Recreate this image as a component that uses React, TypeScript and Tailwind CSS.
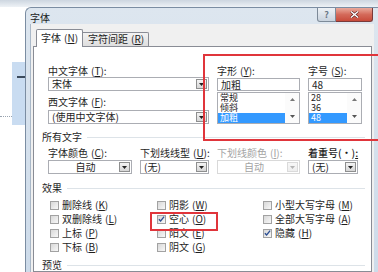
import type { ReactNode } from "react";

// Word 「字体」 dialog (Win7 style) over a document, with two red annotation boxes.

function Key({ label, k, colon = true }: { label: string; k: string; colon?: boolean }) {
  return (
    <span className="whitespace-nowrap">
      {label}
      <span className="ml-[3px]">
        (<span className="underline underline-offset-1">{k}</span>){colon ? ":" : ""}
      </span>
    </span>
  );
}

function DropBtn({ disabled }: { disabled?: boolean }) {
  return (
    <div
      className={
        disabled
          ? "my-[1px] mr-[1px] flex w-[11px] items-center justify-center border border-[#dadada] bg-gradient-to-b from-[#f7f7f7] to-[#eeeeee]"
          : "my-[1px] mr-[1px] flex w-[11px] items-center justify-center border border-[#8e8f8f] bg-gradient-to-b from-[#f4f4f4] to-[#d6d6d6]"
      }
    >
      <svg width="5" height="3" viewBox="0 0 5 3">
        <path d="M0 0h5L2.5 3z" fill={disabled ? "#b4b4b4" : "#222"} />
      </svg>
    </div>
  );
}

function Combo({
  value,
  className,
  center,
  disabled,
}: {
  value: string;
  className: string;
  center?: boolean;
  disabled?: boolean;
}) {
  return (
    <div
      className={`flex h-[14px] border bg-white ${disabled ? "border-[#d9d9d9]" : "border-[#abadb3]"} ${className}`}
    >
      <div
        className={`flex-1 whitespace-nowrap pl-[3px] leading-[12px] ${center ? "text-center" : ""} ${disabled ? "text-[#a3a3a3]" : ""}`}
      >
        {value}
      </div>
      <DropBtn disabled={disabled} />
    </div>
  );
}

function ListBox({ items, selected }: { items: string[]; selected: string }) {
  return (
    <div className="mt-[1px] flex h-[32px] border border-[#abadb3] bg-white">
      <div className="flex flex-1 flex-col text-[9px] leading-[10px]">
        {items.map((it) => (
          <div
            key={it}
            className={it === selected ? "h-[10px] bg-[#3399ff] pl-[2px] text-white" : "h-[10px] pl-[2px]"}
          >
            {it}
          </div>
        ))}
      </div>
      <div className="flex w-[14px] flex-col items-center justify-between bg-[#fbfbfb] py-[5px]">
        <svg width="5" height="3" viewBox="0 0 5 3">
          <path d="M0 3h5L2.5 0z" fill="#777" />
        </svg>
        <svg width="5" height="3" viewBox="0 0 5 3">
          <path d="M0 0h5L2.5 3z" fill="#555" />
        </svg>
      </div>
    </div>
  );
}

function Section({ title }: { title: string }) {
  return (
    <div className="flex h-[12px] items-center leading-[12px]">
      <span>{title}</span>
      <div className="ml-[5px] mr-[6px] h-px flex-1 bg-[#dde3e8]" />
    </div>
  );
}

function Check({ label, k, checked }: { label: string; k: string; checked?: boolean }) {
  return (
    <div className="flex h-[14px] items-center leading-[12px]">
      <div className="flex h-[9px] w-[9px] items-center justify-center border border-[#a2a2a2] bg-gradient-to-br from-[#d8d8d8] to-[#f8f8f8]">
        {checked && (
          <svg width="8" height="8" viewBox="0 0 8 8">
            <path d="M1 4.2 3 6.3 7 1.2" fill="none" stroke="#2c4f93" strokeWidth="1.5" />
          </svg>
        )}
      </div>
      <span className="ml-[3px]">
        <Key label={label} k={k} colon={false} />
      </span>
    </div>
  );
}

function Col({ children, className }: { children: ReactNode; className: string }) {
  return <div className={`flex flex-col ${className}`}>{children}</div>;
}

function DocStrip() {
  return (
    <div className="flex w-[25px] flex-col bg-white">
      <div className="h-[55px]" />
      <div className="flex h-[63px]">
        <div className="flex w-[12px] flex-col justify-end">
          <div className="mb-[8px] border-b border-dotted border-[#9aa4b0]" />
        </div>
        <div className="flex w-[13px] flex-col bg-[#c9dcf1]">
          <div className="ml-[5px] mt-[14px] h-[2px] bg-[#3b4a5c]" />
        </div>
      </div>
    </div>
  );
}

function TitleBar() {
  return (
    <div className="flex h-[22px] items-start">
      <div className="pl-[4px] pt-[4px] leading-[12px] text-[#1a1a1a]">字体</div>
      <div className="flex-1" />
      <div className="mr-[5px] flex">
        <div className="flex h-[14px] w-[19px] items-center justify-center rounded-bl-[3px] border border-t-0 border-[#7d8a98] bg-gradient-to-b from-[#eef2f6] to-[#c9d3de] text-[9px] font-bold leading-none text-[#6b7786]">
          ?
        </div>
        <div className="flex h-[14px] w-[37px] items-center justify-center rounded-br-[3px] border border-l-0 border-t-0 border-[#7a3a3a] bg-gradient-to-b from-[#e9a99c] via-[#d46a5a] to-[#c84a3a]">
          <svg width="9" height="7" viewBox="0 0 9 7">
            <path d="M1 0.5 8 6.5M8 0.5 1 6.5" stroke="#5a2020" strokeWidth="2.6" />
            <path d="M1 0.5 8 6.5M8 0.5 1 6.5" stroke="#fff" strokeWidth="1.4" />
          </svg>
        </div>
      </div>
    </div>
  );
}

function FontPanel() {
  return (
    <div className="flex flex-1 flex-col border border-[#898c95] bg-white pl-[8px]">
      {/* top row: font names, style, size */}
      <div className="mt-[18px] flex pl-[6px]">
        <Col className="w-[161px]">
          <div className="h-[12px] leading-[12px]">
            <Key label="中文字体" k="T" />
          </div>
          <Combo value="宋体" className="w-[161px]" />
          <div className="mt-[5px] h-[12px] leading-[12px]">
            <Key label="西文字体" k="F" />
          </div>
          <Combo value="(使用中文字体)" className="mt-[2px] w-[161px]" />
        </Col>
        <Col className="ml-[8px] w-[83px]">
          <div className="h-[12px] leading-[12px]">
            <Key label="字形" k="Y" />
          </div>
          <div className="mt-[1px] h-[13px] border border-[#abadb3] pl-[3px] leading-[11px]">加粗</div>
          <ListBox items={["常规", "倾斜", "加粗"]} selected="加粗" />
        </Col>
        <Col className="ml-[8px] w-[54px]">
          <div className="h-[12px] leading-[12px]">
            <Key label="字号" k="S" />
          </div>
          <div className="mt-[1px] h-[13px] border border-[#abadb3] pl-[3px] leading-[11px]">48</div>
          <ListBox items={["28", "36", "48"]} selected="48" />
        </Col>
      </div>

      <div className="mt-[7px]">
        <Section title="所有文字" />
      </div>
      <div className="mt-[4px] flex pl-[6px]">
        <Col className="w-[84px]">
          <div className="h-[12px] leading-[12px]">
            <Key label="字体颜色" k="C" />
          </div>
          <Combo value="自动" center className="mt-[1px] w-[84px]" />
        </Col>
        <Col className="ml-[8px] w-[69px]">
          <div className="h-[12px] leading-[12px]">
            <Key label="下划线线型" k="U" />
          </div>
          <Combo value="(无)" className="mt-[1px] w-[69px]" />
        </Col>
        <Col className="ml-[8px] w-[83px]">
          <div className="h-[12px] leading-[12px] text-[#a3a3a3]">
            <Key label="下划线颜色" k="I" />
          </div>
          <Combo value="自动" center disabled className="mt-[1px] w-[83px]" />
        </Col>
        <Col className="ml-[8px] w-[50px]">
          <div className="h-[12px] whitespace-nowrap font-medium leading-[12px]">
            着重号(·)<span className="underline">:</span>
          </div>
          <Combo value="(无)" className="mt-[1px] w-[50px]" />
        </Col>
      </div>

      <div className="mt-[8px]">
        <Section title="效果" />
      </div>
      <div className="mt-[4px] flex pl-[8px]">
        <Col className="w-[107px]">
          <Check label="删除线" k="K" />
          <Check label="双删除线" k="L" />
          <Check label="上标" k="P" />
          <Check label="下标" k="B" />
        </Col>
        <Col className="w-[106px]">
          <Check label="阴影" k="W" />
          <Check label="空心" k="O" checked />
          <Check label="阳文" k="E" />
          <Check label="阴文" k="G" />
        </Col>
        <Col className="flex-1">
          <Check label="小型大写字母" k="M" />
          <Check label="全部大写字母" k="A" />
          <Check label="隐藏" k="H" checked />
        </Col>
      </div>

      <div className="mt-[5px]">
        <Section title="预览" />
      </div>
    </div>
  );
}

function Dialog() {
  return (
    <div className="flex w-[353px] flex-col rounded-tl-[6px] border-l border-t border-[#7b8da2] bg-gradient-to-b from-[#dde6ef] to-[#cddbea]">
      <TitleBar />
      <div className="flex flex-1 pl-[4px] pr-[4px]">
        <div className="flex flex-1 flex-col border-l border-[#a9b8c8] bg-[#f0f0f0] pl-[2px] pr-[2px]">
          <div className="relative z-10 flex h-[22px] items-end pl-[3px]">
            <div className="relative z-10 mb-[-1px] h-[18px] w-[47px] rounded-t-[2px] border border-b-0 border-[#898c95] bg-white pl-[4px] pt-[2px] leading-[12px]">
              <Key label="字体" k="N" colon={false} />
            </div>
            <div className="h-[14px] w-[66px] rounded-tr-[2px] border border-b-0 border-l-0 border-[#898c95] bg-gradient-to-b from-[#f3f3f3] to-[#dedede] pl-[5px] leading-[12px]">
              <Key label="字符间距" k="R" colon={false} />
            </div>
          </div>
          <FontPanel />
        </div>
      </div>
    </div>
  );
}

export default function App() {
  return (
    <div className="relative h-[272px] w-[378px] overflow-hidden bg-white font-['Noto_Sans_CJK_SC','Noto_Sans',sans-serif] text-[10px] text-[#1e1e1e]">
      <div className="h-[7px] bg-gradient-to-b from-[#cdd6e0] to-[#eef2f6]" />
      <div className="flex h-[265px]">
        <DocStrip />
        <Dialog />
      </div>
      {/* red annotation boxes */}
      <div className="absolute left-[203px] top-[54px] h-[87px] w-[180px] border-2 border-[#e0353b]" />
      <div className="absolute left-[150px] top-[212px] h-[19px] w-[68px] border-2 border-[#e0353b]" />
    </div>
  );
}
